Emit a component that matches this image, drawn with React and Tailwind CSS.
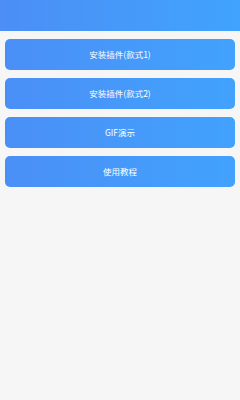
const items = ["安装插件(款式1)", "安装插件(款式2)", "GIF演示", "使用教程"];

export default function App() {
  return (
    <div
      className="w-[240px] h-[400px] bg-[#f6f6f6] flex flex-col"
      style={{ fontFamily: '"Noto Sans CJK SC", "Noto Sans", sans-serif' }}
    >
      <div className="h-[31px] bg-gradient-to-r from-[#4b8ef5] to-[#40a3fe]" />
      <div className="flex flex-col gap-[8px] px-[5px] pt-[8px]">
        {items.map((label) => (
          <button
            key={label}
            className="h-[31px] rounded-[5px] bg-gradient-to-r from-[#4a8ff6] to-[#41a2fd] text-white text-[8.5px] flex items-center justify-center"
          >
            {label}
          </button>
        ))}
      </div>
    </div>
  );
}
